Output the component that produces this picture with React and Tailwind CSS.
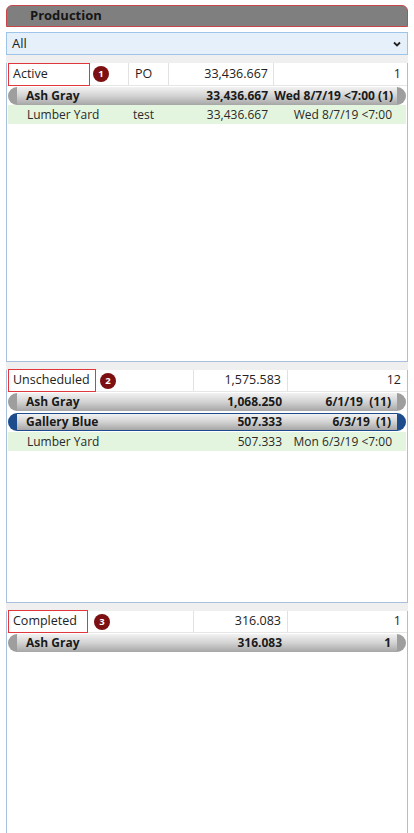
import React from 'react';

const font = { fontFamily: '"Open Sans", "Noto Sans", sans-serif' };

const Badge = ({ n }) => (
  <div className="w-[16px] h-[16px] rounded-full bg-[#7b0f12] text-white text-[9.5px] font-bold flex items-center justify-center leading-none">
    {n}
  </div>
);

const LabelBox = ({ children, width }) => (
  <div
    className="h-[23px] border-[1.5px] border-[#e2383d] bg-white flex items-center pl-[4px] text-[12.5px] text-[#222]"
    style={{ width }}
  >
    {children}
  </div>
);

// pill row used for color groups
const Pill = ({ blue, children }) => (
  <div className={`mx-[1px] h-[18px] rounded-full px-[9px] ${blue ? 'bg-[#1c4c8c]' : 'bg-[#9e9e9e]'}`}>
    <div
      className={`h-full flex items-center bg-linear-to-b from-[#f2f2f2] via-[#d2d2d2] to-[#a6a6a6] text-[12px] font-bold text-[#1a1a1a] ${
        blue ? 'border-y border-[#1c4c8c]' : ''
      }`}
    >
      {children}
    </div>
  </div>
);

const Green = ({ children }) => (
  <div className="mx-[1px] h-[19px] bg-[#e4f5df] flex items-center text-[12px] text-[#2a2a2a]">{children}</div>
);

const Section = ({ height, children }) => (
  <div className="mx-[6px]">
    <div className="h-[8px] bg-[#efefef]" />
    <div className="border-x border-b border-[#a9c0dc] bg-white" style={{ height }}>
      {children}
    </div>
  </div>
);

export default function App() {
  return (
    <div className="w-[414px] h-[833px] bg-white overflow-hidden text-[#222]" style={font}>
      {/* title bar */}
      <div className="mx-[6px] mt-[5px] h-[22px] rounded-t-[6px] bg-[#7f7f7f] border border-[#c9474b] flex items-center pl-[23px] text-[13px] font-bold text-[#161616]">
        Production
      </div>

      {/* filter dropdown */}
      <div className="mx-[6px] mt-[5px] h-[23px] bg-[#e6f0fb] border border-[#9fc4ea] flex items-center justify-between pl-[5px] pr-[6px] text-[13px]">
        <span>All</span>
        <svg width="8" height="6" viewBox="0 0 8 6">
          <path d="M1 1.5 L4 4.5 L7 1.5" fill="none" stroke="#222" strokeWidth="1.8" />
        </svg>
      </div>

      {/* Active */}
      <Section height={299}>
        <div className="flex h-[23px] items-center border-b border-[#e6e6e6] text-[12.5px]">
          <div className="w-[1px]" />
          <LabelBox width={82}>Active</LabelBox>
          <div className="w-[38px] pl-[3px] flex items-center">
            <Badge n="1" />
          </div>
          <div className="w-[40px] h-full border-l border-[#e2e2e2] flex items-center pl-[6px]">PO</div>
          <div className="w-[105px] h-full border-l border-[#e2e2e2] flex items-center justify-end pr-[5px]">33,436.667</div>
          <div className="flex-1 h-full border-l border-[#e2e2e2] flex items-center justify-end pr-[6px]">1</div>
        </div>
        <div className="mt-[1px]">
          <Pill>
            <span className="w-[151px] pl-[9px]">Ash Gray</span>
            <span className="w-[105px] text-right pr-[5px]">33,436.667</span>
            <span className="flex-1 text-right pr-[4px]">Wed 8/7/19 &lt;7:00 (1)</span>
          </Pill>
        </div>
        <Green>
          <span className="w-[120px] pl-[19px]">Lumber Yard</span>
          <span className="w-[40px] pl-[5px]">test</span>
          <span className="w-[105px] text-right pr-[5px]">33,436.667</span>
          <span className="flex-1 text-right pr-[14px]">Wed 8/7/19 &lt;7:00</span>
        </Green>
      </Section>

      {/* Unscheduled */}
      <Section height={233}>
        <div className="flex h-[22px] items-center border-b border-[#e6e6e6] text-[12.5px]">
          <div className="w-[1px]" />
          <LabelBox width={88}>Unscheduled</LabelBox>
          <div className="w-[97px] pl-[4px] flex items-center">
            <Badge n="2" />
          </div>
          <div className="w-[94px] h-full border-l border-[#e2e2e2] flex items-center justify-end pr-[6px]">1,575.583</div>
          <div className="flex-1 h-full border-l border-[#e2e2e2] flex items-center justify-end pr-[6px]">12</div>
        </div>
        <div className="mt-[1px] flex flex-col gap-[2px]">
          <Pill>
            <span className="w-[176px] pl-[9px]">Ash Gray</span>
            <span className="w-[89px] text-right">1,068.250</span>
            <span className="flex-1 text-right pr-[6px]">6/1/19&nbsp;&nbsp;(11)</span>
          </Pill>
          <Pill blue>
            <span className="w-[176px] pl-[9px]">Gallery Blue</span>
            <span className="w-[89px] text-right">507.333</span>
            <span className="flex-1 text-right pr-[6px]">6/3/19&nbsp;&nbsp;(1)</span>
          </Pill>
        </div>
        <div className="mt-[1px]">
          <Green>
            <span className="w-[185px] pl-[19px]">Lumber Yard</span>
            <span className="w-[89px] text-right">507.333</span>
            <span className="flex-1 text-right pr-[14px]">Mon 6/3/19 &lt;7:00</span>
          </Green>
        </div>
      </Section>

      {/* Completed */}
      <Section height={240}>
        <div className="flex h-[22px] items-center border-b border-[#e6e6e6] text-[12.5px]">
          <div className="w-[1px]" />
          <LabelBox width={80}>Completed</LabelBox>
          <div className="w-[105px] pl-[6px] flex items-center">
            <Badge n="3" />
          </div>
          <div className="w-[94px] h-full border-l border-[#e2e2e2] flex items-center justify-end pr-[6px]">316.083</div>
          <div className="flex-1 h-full border-l border-[#e2e2e2] flex items-center justify-end pr-[6px]">1</div>
        </div>
        <div className="mt-[1px]">
          <Pill>
            <span className="w-[176px] pl-[9px]">Ash Gray</span>
            <span className="w-[89px] text-right">316.083</span>
            <span className="flex-1 text-right pr-[6px]">1</span>
          </Pill>
        </div>
      </Section>
    </div>
  );
}
